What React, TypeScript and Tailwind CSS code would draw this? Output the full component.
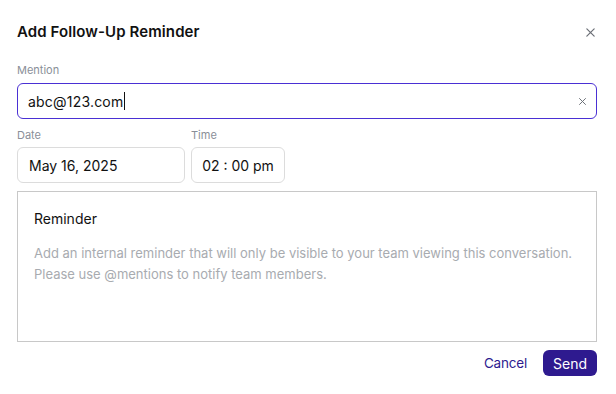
import React from 'react';

const XIcon = ({ size = 12, className = '' }: { size?: number; className?: string }) => (
  <svg width={size} height={size} viewBox="0 0 12 12" className={className} fill="none" stroke="currentColor" strokeWidth="1.3" strokeLinecap="round">
    <path d="M2 2l8 8M10 2l-8 8" />
  </svg>
);

export default function App() {
  return (
    <div className="w-[616px] h-[394px] bg-white text-[#1a1a1a]" style={{ fontFamily: 'Inter, "Noto Sans", sans-serif' }}>
      <div className="pl-[17px] pr-[19px] pt-[22px]">
        {/* Header */}
        <div className="flex items-center justify-between h-[20px]">
          <h1 className="text-[15px] font-semibold tracking-[0.1px] text-[#111]">Add Follow-Up Reminder</h1>
          <button className="text-[#6b6f76] mr-[1px]">
            <XIcon size={11} />
          </button>
        </div>

        {/* Mention */}
        <div className="mt-[21px]">
          <label className="block text-[11px] leading-[14px] text-[#8a8f98]">Mention</label>
          <div className="mt-[6px] h-[36px] border border-[#4a30d4] rounded-[6px] flex items-center pl-[10px] pr-[9px]">
            <span className="text-[14px] text-[#111] tracking-[0.2px]">abc@123.com</span>
            <span className="w-px h-[18px] bg-[#111] ml-[1px]" />
            <span className="flex-1" />
            <XIcon size={9} className="text-[#6b6f76]" />
          </div>
        </div>

        {/* Date & time */}
        <div className="mt-[9px] flex gap-[6px]">
          <div>
            <label className="block text-[11px] leading-[14px] text-[#8a8f98]">Date</label>
            <div className="mt-[5px] w-[168px] h-[36px] border border-[#dcdcdc] rounded-[6px] flex items-center px-[11px] text-[14px] text-[#111]">
              May 16, 2025
            </div>
          </div>
          <div>
            <label className="block text-[11px] leading-[14px] text-[#8a8f98]">Time</label>
            <div className="mt-[5px] w-[94px] h-[36px] border border-[#dcdcdc] rounded-[6px] flex items-center justify-center text-[14px] text-[#111]">
              02 : 00 pm
            </div>
          </div>
        </div>

        {/* Reminder */}
        <div className="mt-[8px] h-[151px] border border-[#c8c8c8] px-[16px] pt-[16px]">
          <div className="text-[14px] text-[#111]">Reminder</div>
          <p className="mt-[14px] text-[13px] leading-[21px] text-[#a8abb0]">
            Add an internal reminder that will only be visible to your team viewing this conversation.
            <br />
            Please use @mentions to notify team members.
          </p>
        </div>

        {/* Footer */}
        <div className="mt-[8px] h-[26px] flex items-center justify-end gap-[16px]">
          <button className="text-[13.5px] text-[#2e1b8f] tracking-[-0.2px]">Cancel</button>
          <button className="h-[26px] px-[10px] rounded-[6px] bg-[#2e1a8f] text-white text-[14px]">Send</button>
        </div>
      </div>
    </div>
  );
}
